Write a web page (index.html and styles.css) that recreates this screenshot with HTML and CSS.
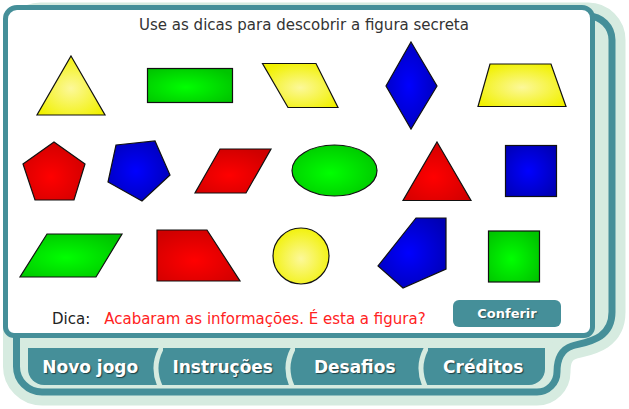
FILE: index.html
```html
<!DOCTYPE html>
<html lang="pt">
<head>
<meta charset="utf-8">
<title>Figura secreta</title>
<link rel="stylesheet" href="styles.css">
</head>
<body>
<div class="stage">
  <svg class="frame" width="629" height="409" viewBox="0 0 629 409" aria-hidden="true">
    <path class="frame-glow" d="M40.5 16 H588 A24 24 0 0 1 612 40 V312 C612 340 586 342 572 346 C560 350 557 360 557 372 A20 20 0 0 1 537 392 H42 A25.5 25.5 0 0 1 16.5 366.5 V40 A24 24 0 0 1 40.5 16 Z"/>
    <path class="frame-ring" d="M40.5 16 H588 A24 24 0 0 1 612 40 V312 C612 340 586 342 572 346 C560 350 557 360 557 372 A20 20 0 0 1 537 392 H42 A25.5 25.5 0 0 1 16.5 366.5 V40 A24 24 0 0 1 40.5 16 Z"/>
  </svg>

  <div class="panel">
    <div class="title">Use as dicas para descobrir a figura secreta</div>
    <svg class="board" width="582" height="260" viewBox="8 35 582 260">
      <defs>
        <radialGradient id="gy" cx="0.5" cy="0.55" r="0.6">
          <stop offset="0" stop-color="#fcf89a"/>
          <stop offset="1" stop-color="#f1f100"/>
        </radialGradient>
        <radialGradient id="gg" cx="0.45" cy="0.55" r="0.65">
          <stop offset="0" stop-color="#00ff00"/>
          <stop offset="1" stop-color="#00c400"/>
        </radialGradient>
        <radialGradient id="gr" cx="0.45" cy="0.6" r="0.65">
          <stop offset="0" stop-color="#ff0000"/>
          <stop offset="1" stop-color="#cf0000"/>
        </radialGradient>
        <radialGradient id="gb" cx="0.45" cy="0.5" r="0.65">
          <stop offset="0" stop-color="#0000ff"/>
          <stop offset="1" stop-color="#0000b4"/>
        </radialGradient>
      </defs>
      <g class="shape">
        <!-- row 1 -->
        <polygon fill="url(#gy)" points="71,56 105,115 37,115"/>
        <rect fill="url(#gg)" x="147.5" y="68.5" width="85" height="34"/>
        <polygon fill="url(#gy)" points="262.5,63.5 316,63.5 338,107.5 288,107.5"/>
        <polygon fill="url(#gb)" points="411,42 437,86 411,129 386,86"/>
        <polygon fill="url(#gy)" points="490,64 551,64 566,106.5 478,106.5"/>
        <!-- row 2 -->
        <polygon fill="url(#gr)" points="54,142 85,164 74,200 35,200 23,164"/>
        <polygon fill="url(#gb)" points="116,145 155,141 170,175 142,201 108,182"/>
        <polygon fill="url(#gr)" points="220,149 271,149 246,193 195,193"/>
        <ellipse fill="url(#gg)" cx="334.5" cy="170.5" rx="42.5" ry="25.5"/>
        <polygon fill="url(#gr)" points="437,142 471,200.5 403,200.5"/>
        <rect fill="url(#gb)" x="505.5" y="145.5" width="51" height="51"/>
        <!-- row 3 -->
        <polygon fill="url(#gg)" points="47,234 122,234 96,277 20,277"/>
        <polygon fill="url(#gr)" points="157,230 207,230 240,281 157,281"/>
        <circle fill="url(#gy)" cx="301" cy="256" r="28"/>
        <polygon fill="url(#gb)" points="416,218 446,218 446,269 403,288 378,266"/>
        <rect fill="url(#gg)" x="488.5" y="231" width="51" height="51"/>
      </g>
    </svg>
    <div class="hint-row">
      <span class="dica">Dica:</span>
      <span class="msg">Acabaram as informações. É esta a figura?</span>
      <button class="check" type="button">Conferir</button>
    </div>
  </div>

  <nav class="tabs">
    <a class="tab tab-first">Novo jogo</a>
    <span class="sep"><svg width="11" height="37" viewBox="0 0 11 37"><path d="M10 -1 Q-1 18 8 38"/></svg></span>
    <a class="tab">Instruções</a>
    <span class="sep"><svg width="11" height="37" viewBox="0 0 11 37"><path d="M10 -1 Q-1 18 8 38"/></svg></span>
    <a class="tab">Desafios</a>
    <span class="sep"><svg width="11" height="37" viewBox="0 0 11 37"><path d="M10 -1 Q-1 18 8 38"/></svg></span>
    <a class="tab tab-last">Créditos</a>
  </nav>
</div>
</body>
</html>
```

FILE: styles.css
```css
html, body {
  margin: 0;
  padding: 0;
  background: #ffffff;
}

.stage {
  position: relative;
  width: 629px;
  height: 409px;
  overflow: hidden;
  font-family: "DejaVu Sans", Verdana, sans-serif;
}

.frame {
  position: absolute;
  left: 0;
  top: 0;
  z-index: 0;
}

.frame-glow {
  fill: #d6ebe0;
  stroke: #d6ebe0;
  stroke-width: 27;
  stroke-linejoin: round;
}

.frame-ring {
  fill: none;
  stroke: #458f99;
  stroke-width: 7;
}

.panel {
  position: relative;
  z-index: 1;
  box-sizing: border-box;
  width: 592px;
  height: 333px;
  margin: 5px 0 0 3px;
  border: 5px solid #458f99;
  border-radius: 14px 13px 11px 11px;
  background: #ffffff;
  display: flex;
  flex-direction: column;
}

.title {
  height: 25px;
  padding-left: 10px;
  box-sizing: border-box;
  padding-top: 6px;
  text-align: center;
  font-size: 15px;
  line-height: 18px;
  color: #333333;
}

.board {
  display: block;
}

.shape > * {
  stroke: #111111;
  stroke-width: 1.2;
  stroke-linejoin: miter;
}

.hint-row {
  display: flex;
  align-items: flex-start;
  padding: 5px 29px 0 44px;
}

.dica {
  margin-top: 10px;
  font-size: 15px;
  line-height: 18px;
  color: #222222;
}

.msg {
  margin: 10px 0 0 14px;
  font-size: 15px;
  line-height: 18px;
  color: #ff2222;
}

.check {
  margin-left: auto;
  width: 108px;
  height: 27px;
  border: 0;
  border-radius: 6px;
  background: #458f99;
  color: #ffffff;
  font-family: "DejaVu Sans", Verdana, sans-serif;
  font-weight: bold;
  font-size: 13px;
  text-shadow: 1px 1px 1px #2a4f55;
  padding: 0;
}

.tabs {
  position: relative;
  z-index: 1;
  display: flex;
  width: 517px;
  height: 37px;
  margin: 10px 0 0 28px;
}

.tab {
  display: flex;
  align-items: center;
  justify-content: center;
  box-sizing: border-box;
  background: #458f99;
  color: #ffffff;
  font-weight: bold;
  font-size: 17px;
  text-shadow: 1px 1px 1px #1f3f44;
  cursor: pointer;
}

.tab:nth-of-type(1) { width: 125px; }
.tab:nth-of-type(2) { width: 121px; padding-right: 2px; }
.tab:nth-of-type(3) { width: 123px; padding-right: 3px; }
.tab:nth-of-type(4) { width: 117px; padding-right: 7px; }

.tab-first {
  border-bottom-left-radius: 16px;
}

.tab-last {
  border-bottom-right-radius: 16px;
}

.sep {
  display: block;
  width: 11px;
  height: 37px;
  background: #458f99;
}

.sep svg {
  display: block;
}

.sep path {
  fill: none;
  stroke: #d6ebe0;
  stroke-width: 5;
}
```
